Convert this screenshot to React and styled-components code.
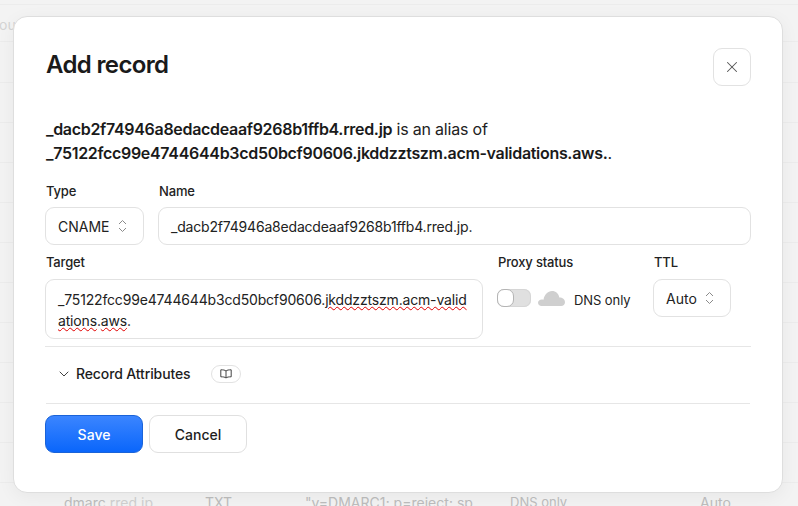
import React from "react";
import styled, { createGlobalStyle } from "styled-components";
import { ChevronDown, X } from "lucide-react";

const GlobalStyle = createGlobalStyle`
  html, body {
    margin: 0;
    padding: 0;
    height: 100%;
    background: #f3f3f3;
    font-family: Inter, "Noto Sans", sans-serif;
    color: #1d1d1d;
    overflow: hidden;
  }
`;

const rowHeights = [5, 37, 41, 40, 40, 40, 40, 40, 40, 40, 40, 40, 40];

function UpDownIcon() {
  return (
    <svg width="9" height="14" viewBox="0 0 9 14" fill="none" stroke="#8a8a8a" strokeWidth="1">
      <path d="M1 5L4.500 1.500L8 5" />
      <path d="M1 9L4.500 12.500L8 9" />
    </svg>
  );
}

function App() {
  return (
    <Page>
      <GlobalStyle />
      <Table>
        {rowHeights.map((height, i) => (
          <BackRow key={i} $height={height} />
        ))}
        <LastRow>
          <BackCell $width="141px">
            dmarc<Faded>.rred.jp</Faded>
          </BackCell>
          <BackCell $width="100px">TXT</BackCell>
          <BackCell $width="205px">"v=DMARC1; p=reject; sp</BackCell>
          <BackCell $width="190px" $small>
            DNS only
          </BackCell>
          <BackCell $width="80px">Auto</BackCell>
        </LastRow>
      </Table>
      <BackHint>ou</BackHint>

      <Modal>
        <Header>
          <Title>Add record</Title>
          <CloseBtn aria-label="Close">
            <X size={18} strokeWidth={1.4} />
          </CloseBtn>
        </Header>

        <Description>
          <b>_dacb2f74946a8edacdeaaf9268b1ffb4.rred.jp</b> is an alias of
          <br />
          <b>_75122fcc99e4744644b3cd50bcf90606.jkddzztszm.acm-validations.aws.</b>.
        </Description>

        <TopRow>
          <Field>
            <Label>Type</Label>
            <Select $width="99px">
              CNAME
              <UpDownIcon />
            </Select>
          </Field>
          <Field $grow>
            <Label>Name</Label>
            <Input>_dacb2f74946a8edacdeaaf9268b1ffb4.rred.jp.</Input>
          </Field>
        </TopRow>

        <SecondRow>
          <Field $width="438px">
            <TightLabel>Target</TightLabel>
            <TextArea>
              _75122fcc99e4744644b3cd50bcf90606.
              <Misspelled>jkddzztszm.acm-valid</Misspelled>
              <br />
              <Misspelled>ations</Misspelled>.<Misspelled>aws</Misspelled>.
            </TextArea>
          </Field>
          <Field $width="142px">
            <TightLabel>Proxy status</TightLabel>
            <ProxyRow>
              <Toggle>
                <Knob />
              </Toggle>
              <svg width="27" height="15" viewBox="0 0 27 15" fill="#cfcfcf">
                <path d="M3.500 15C1.500 15 0 13.500 0 11.800C0 9.800 1.700 8.400 3.800 8.400C4.300 8.400 5 8.500 5.500 8.700C6.300 3.500 9.800 0 14 0C17.800 0 20.600 2.600 21.300 6.500C24.500 6.500 27 8.500 27 11.200C27 13.500 25.300 15 23.200 15Z" />
              </svg>
              <ProxyText>DNS only</ProxyText>
            </ProxyRow>
          </Field>
          <Field>
            <TightLabel>TTL</TightLabel>
            <Select $width="78px">
              Auto
              <UpDownIcon />
            </Select>
          </Field>
        </SecondRow>

        <Attributes>
          <ChevronDown size={16} strokeWidth={1.4} />
          <AttrText>Record Attributes</AttrText>
          <DocPill>
            <svg width="12" height="10" viewBox="0 0 12 10" fill="none" stroke="#444" strokeWidth="1">
              <path d="M6 2C5 1 3 .8 .8 .8V7.800C3 7.800 5 8 6 9C7 8 9 7.800 11.200 7.800V.8C9 .8 7 1 6 2ZM6 2V9" />
            </svg>
          </DocPill>
        </Attributes>

        <Actions>
          <SaveBtn>Save</SaveBtn>
          <CancelBtn>Cancel</CancelBtn>
        </Actions>
      </Modal>
    </Page>
  );
}

export default App;

const Page = styled.div`
  position: relative;
  width: 798px;
  height: 506px;
  overflow: hidden;
  background: #f3f3f3;
`;

const Table = styled.div`
  display: flex;
  flex-direction: column;
`;

const BackRow = styled.div`
  flex: none;
  height: ${(props) => props.$height}px;
  border-bottom: 1px solid #ececec;
  box-sizing: border-box;
`;

const LastRow = styled.div`
  display: flex;
  align-items: center;
  flex: none;
  padding-left: 64px;
  height: 40px;
  margin-top: -1px;
  color: #bdbdbd;
`;

const BackCell = styled.div`
  width: ${(props) => props.$width};
  flex: none;
  white-space: nowrap;
  font-size: ${(props) => (props.$small ? "13px" : "14px")};
`;

const Faded = styled.span`
  color: #d0d0d0;
`;

const BackHint = styled.div`
  position: absolute;
  left: -1px;
  top: 16px;
  font-size: 14px;
  color: #d4d4d4;
`;

const Modal = styled.div`
  position: absolute;
  left: 13px;
  top: 16px;
  width: 770px;
  height: 477px;
  box-sizing: border-box;
  padding: 31px 31px 0;
  background: #fff;
  border: 1px solid #dedede;
  border-radius: 14px;
  box-shadow: 0 4px 18px rgba(0, 0, 0, 0.05);
`;

const Header = styled.div`
  display: flex;
  justify-content: space-between;
  align-items: flex-start;
`;

const Title = styled.h1`
  margin: 0;
  padding: 1px 0 0 1px;
  font-size: 24px;
  line-height: 32px;
  font-weight: 600;
  letter-spacing: -0.65px;
  color: #1a1a1a;
`;

const CloseBtn = styled.button`
  width: 38px;
  height: 38px;
  padding: 0;
  display: flex;
  align-items: center;
  justify-content: center;
  background: #fff;
  border: 1px solid #e2e2e2;
  border-radius: 9px;
  color: #555;
`;

const Description = styled.p`
  margin: 31px 0 0 1px;
  font-size: 16px;
  line-height: 24px;
  letter-spacing: -0.2px;
  color: #222;
  b {
    font-weight: 600;
    letter-spacing: -0.31px;
    color: #1a1a1a;
  }
`;

const TopRow = styled.div`
  display: flex;
  gap: 14px;
  margin-top: 18px;
`;

const SecondRow = styled.div`
  display: flex;
  gap: 14px;
  margin-top: 9px;
  height: 85px;
  padding-bottom: 7px;
  border-bottom: 1px solid #e6e6e6;
`;

const Field = styled.div`
  display: flex;
  flex-direction: column;
  ${(props) => props.$width && `width: ${props.$width};`}
  ${(props) => props.$grow && "flex: 1;"}
`;

const Label = styled.label`
  padding-left: 1px;
  font-size: 13px;
  line-height: 16px;
  font-weight: 500;
  letter-spacing: -0.16px;
  color: #222;
  margin-bottom: 8px;
`;

const TightLabel = styled(Label)`
  margin-bottom: 9px;
`;

const Select = styled.div`
  width: ${(props) => props.$width};
  height: 38px;
  box-sizing: border-box;
  padding: 0 16px 0 12px;
  display: flex;
  align-items: center;
  justify-content: space-between;
  border: 1px solid #e2e2e2;
  border-radius: 9px;
  font-size: 14px;
  color: #222;
`;

const Input = styled.div`
  height: 38px;
  box-sizing: border-box;
  padding: 0 12px;
  display: flex;
  align-items: center;
  border: 1px solid #e2e2e2;
  border-radius: 9px;
  font-size: 14px;
  letter-spacing: -0.19px;
  color: #222;
`;

const TextArea = styled.div`
  height: 60px;
  box-sizing: border-box;
  padding: 9px 12px;
  border: 1px solid #e2e2e2;
  border-radius: 9px;
  font-size: 14px;
  line-height: 21px;
  letter-spacing: -0.17px;
  color: #222;
  white-space: nowrap;
`;

const Misspelled = styled.span`
  text-decoration: underline wavy #e00000 1px;
  text-underline-offset: 1px;
`;

const ProxyRow = styled.div`
  display: flex;
  align-items: center;
  height: 20px;
  margin-top: 9px;
`;

const Toggle = styled.div`
  position: relative;
  flex: none;
  width: 34px;
  height: 18px;
  box-sizing: border-box;
  margin-right: 7px;
  background: #e0e0e0;
  border-radius: 7px;
  box-shadow: inset 0 0 0 1px #d6d6d6;
`;

const Knob = styled.div`
  position: absolute;
  left: 0;
  top: 0;
  width: 17px;
  height: 18px;
  box-sizing: border-box;
  background: #fff;
  border: 1px solid #b4b4b4;
  border-radius: 7px;
`;

const ProxyText = styled.span`
  margin: 3px 0 0 9px;
  font-size: 13px;
  letter-spacing: -0.08px;
  color: #222;
`;

const Attributes = styled.div`
  display: flex;
  align-items: center;
  height: 53px;
  margin: 0 1px;
  padding: 0 0 3px 10px;
  border-bottom: 1px solid #e6e6e6;
  color: #333;
`;

const AttrText = styled.span`
  margin-left: 4px;
  font-size: 14px;
  font-weight: 500;
  letter-spacing: -0.12px;
  color: #1d1d1d;
`;

const DocPill = styled.span`
  margin-left: 21px;
  width: 30px;
  height: 18px;
  box-sizing: border-box;
  display: flex;
  align-items: center;
  justify-content: center;
  border: 1px solid #e2e2e2;
  border-radius: 9px;
`;

const Actions = styled.div`
  display: flex;
  gap: 6px;
  margin-top: 11px;
`;

const SaveBtn = styled.button`
  width: 98px;
  height: 38px;
  font-family: inherit;
  font-size: 14px;
  font-weight: 500;
  color: #fff;
  background: linear-gradient(#3b85ff, #0a66fb);
  border: 1px solid #1a63d8;
  border-radius: 9px;
`;

const CancelBtn = styled.button`
  width: 98px;
  height: 38px;
  font-family: inherit;
  font-size: 14px;
  font-weight: 500;
  color: #1d1d1d;
  background: #fff;
  border: 1px solid #e0e0e0;
  border-radius: 9px;
`;
